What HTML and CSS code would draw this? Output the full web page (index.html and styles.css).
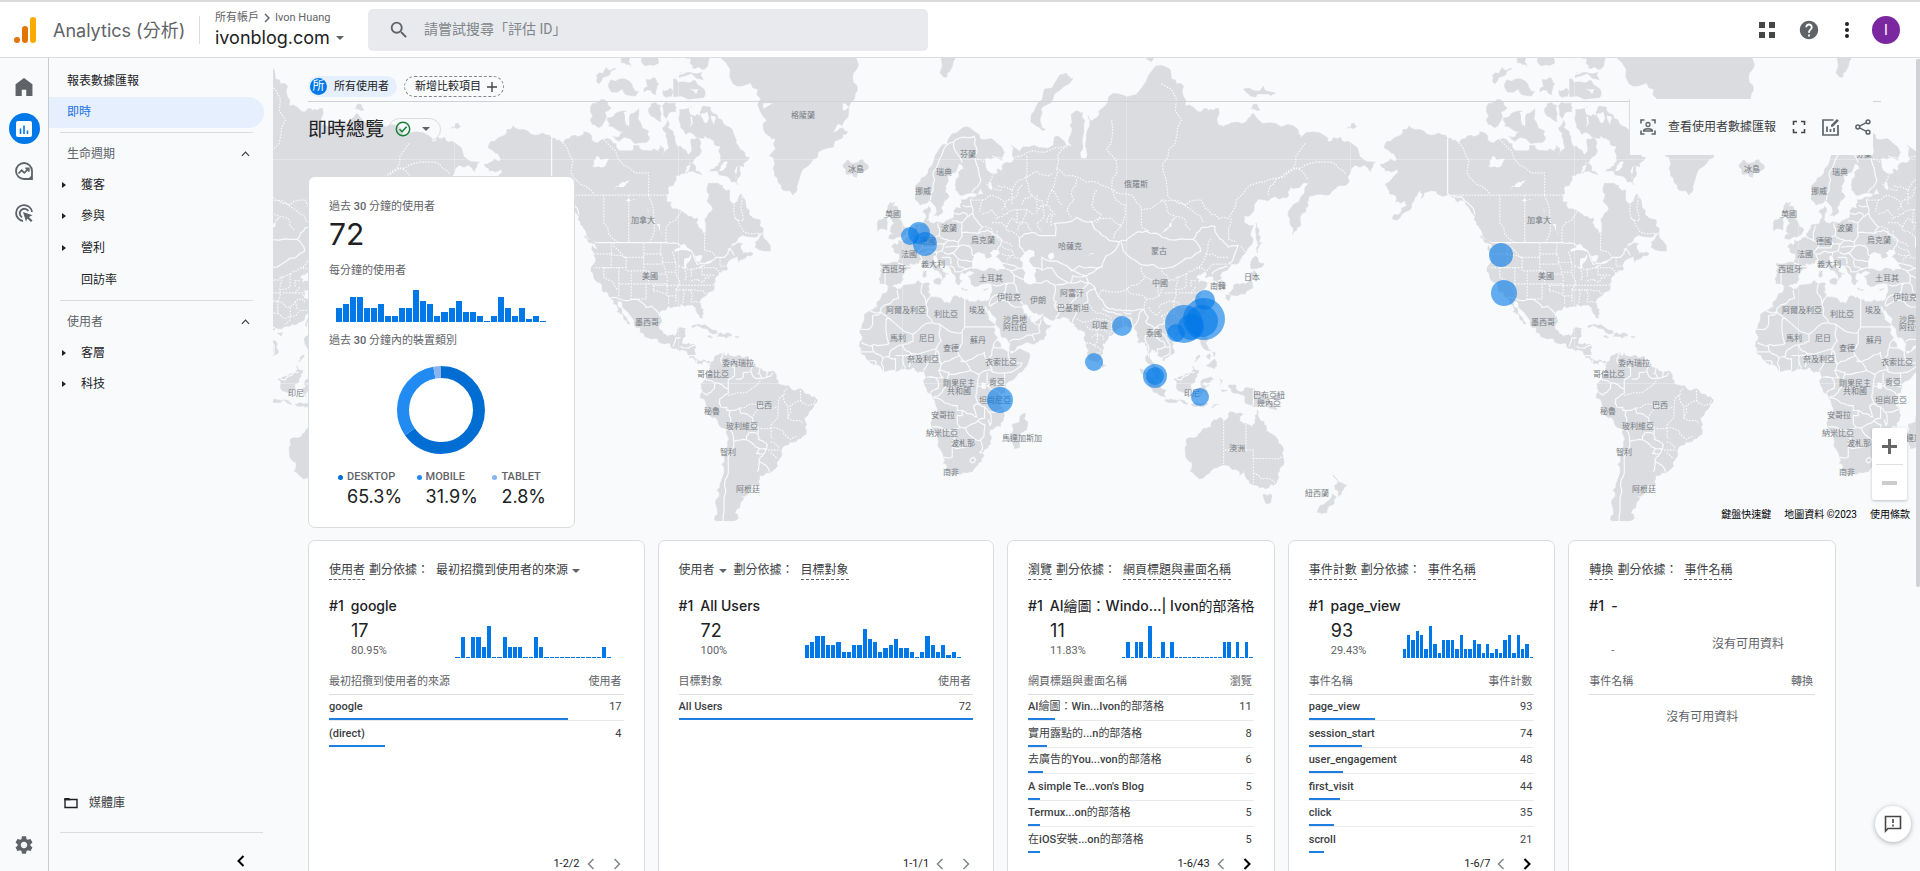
FILE: index.html
```html
<!DOCTYPE html>
<html lang="zh-Hant">
<head>
<meta charset="utf-8">
<title>Analytics (分析) - 即時總覽</title>
<link rel="stylesheet" href="styles.css">
</head>
<body>
<header class="topbar">
  <div class="brand">
    <svg class="logo" viewBox="0 0 22 26" aria-hidden="true"><rect x="16" y="0" width="6" height="26" rx="3" fill="#f9ab00"/><rect x="8" y="9" width="6" height="17" rx="3" fill="#e37400"/><circle cx="3" cy="23" r="3" fill="#e8710a"/></svg>
    <span class="brand-name">Analytics (分析)</span>
  </div>
  <div class="account">
    <div class="crumbs"><span>所有帳戶</span><svg class="crumb-sep" viewBox="0 0 6 10" aria-hidden="true"><path d="M1 1l4 4-4 4" fill="none" stroke="#5f6368" stroke-width="1.5"/></svg><span>Ivon Huang</span></div>
    <button class="property" type="button">ivonblog.com<i class="caret"></i></button>
  </div>
  <label class="search">
    <svg viewBox="0 0 24 24" aria-hidden="true"><path fill="#5f6368" d="M15.5 14h-.79l-.28-.27A6.471 6.471 0 0 0 16 9.5 6.5 6.5 0 1 0 9.5 16c1.61 0 3.09-.59 4.23-1.57l.27.28v.79l5 4.99L20.49 19l-4.99-5zm-6 0C7.01 14 5 11.99 5 9.5S7.01 5 9.5 5 14 7.01 14 9.5 11.99 14 9.5 14z"/></svg>
    <input type="search" placeholder="請嘗試搜尋「評估 ID」" aria-label="搜尋">
  </label>
  <div class="top-actions">
    <button type="button" aria-label="應用程式"><svg viewBox="0 0 22 22"><path fill="#444746" d="M3 3h6v6H3zM13 3h6v6h-6zM3 13h6v6H3zM13 13h6v6h-6z"/></svg></button>
    <button type="button" aria-label="說明"><svg viewBox="0 0 24 24"><path fill="#5f6368" d="M12 2C6.48 2 2 6.48 2 12s4.480 10 10 10 10-4.480 10-10S17.520 2 12 2zm1 17h-2v-2h2v2zm2.070-7.750l-.9.920C13.450 12.900 13 13.500 13 15h-2v-.5c0-1.100.450-2.100 1.170-2.830l1.240-1.260c.370-.360.590-.860.590-1.410 0-1.100-.9-2-2-2s-2 .9-2 2H8c0-2.210 1.790-4 4-4s4 1.790 4 4c0 .880-.360 1.680-.930 2.250z"/></svg></button>
    <button type="button" aria-label="更多"><svg viewBox="0 0 22 22"><g fill="#202124"><circle cx="11" cy="5" r="2"/><circle cx="11" cy="11" r="2"/><circle cx="11" cy="17" r="2"/></g></svg></button>
    <button class="avatar" type="button">I</button>
  </div>
</header>

<div class="shell">
  <nav class="rail" aria-label="主要">
    <a href="#home" aria-label="首頁"><svg viewBox="0 0 16 16"><path fill="#5f6368" d="M8 0l7.500 5.500V16H10v-5.500H6V16H.5V5.500z"/></svg></a>
    <a href="#reports" class="on" aria-label="報表"><svg viewBox="0 0 16 16"><rect width="16" height="16" rx="2" fill="#fff"/><path d="M4.500 7.500V13M8 4.500V13M11.500 9.500V13" stroke="#0078e7" stroke-width="1.600"/></svg></a>
    <a href="#explore" aria-label="探索"><svg viewBox="0 0 18 18"><path fill="none" stroke="#5f6368" stroke-width="1.800" d="M9 1a8 8 0 1 0 0 16h8V9a8 8 0 0 0-8-8z"/><path fill="none" stroke="#5f6368" stroke-width="1.700" d="M3.500 11.500l3.200-3.200 2.600 2.600 4-4M10.300 6.300h3.500v3.500"/><path fill="#5f6368" d="M13 17h4v-4z"/></svg></a>
    <a href="#ads" aria-label="廣告"><svg viewBox="0 0 18 18"><path fill="none" stroke="#5f6368" stroke-width="1.800" d="M8 17A8 8 0 1 1 17 8M7 13.300A4.600 4.600 0 1 1 13.300 7"/><path fill="#5f6368" d="M8 8l9.500 3.200-3.600 1.700 3.600 3.600-1.500 1.500-3.600-3.600L11 17.500z"/></svg></a>
    <a href="#admin" class="admin" aria-label="管理"><svg viewBox="2 2 20 20"><path fill="#5f6368" d="M19.140 12.940c.040-.300.060-.610.060-.940 0-.320-.020-.640-.070-.940l2.030-1.580c.180-.140.230-.410.120-.610l-1.920-3.320c-.120-.220-.370-.290-.590-.220l-2.390.960c-.500-.380-1.030-.700-1.620-.940l-.360-2.540c-.040-.240-.240-.410-.480-.410h-3.840c-.240 0-.430.170-.470.410l-.360 2.540c-.590.240-1.130.570-1.620.940l-2.390-.960c-.220-.080-.470 0-.590.220L2.740 8.870c-.120.210-.080.470.120.610l2.030 1.580c-.050.300-.090.630-.090.940s.020.640.070.940l-2.030 1.580c-.180.140-.230.410-.120.610l1.920 3.320c.120.220.370.290.590.220l2.390-.960c.500.380 1.030.700 1.620.940l.360 2.540c.050.240.240.410.480.410h3.840c.240 0 .440-.170.470-.410l.360-2.540c.590-.240 1.130-.560 1.620-.940l2.390.960c.220.080.470 0 .590-.220l1.920-3.320c.120-.220.070-.470-.120-.610l-2.010-1.580zM12 15.600c-1.980 0-3.600-1.620-3.600-3.600s1.620-3.600 3.600-3.600 3.600 1.620 3.600 3.600-1.620 3.600-3.600 3.600z"/></svg></a>
  </nav>

  <nav class="sidebar" aria-label="報表">
    <a class="side-link" href="#snapshot">報表數據匯報</a>
    <a class="side-link active" href="#realtime">即時</a>
    <section class="group">
      <button class="group-head" type="button">生命週期<svg viewBox="0 0 10 6"><path d="M1 5l4-4 4 4" fill="none" stroke="#3c4043" stroke-width="1.300"/></svg></button>
      <a class="item parent" href="#acq">獲客</a>
      <a class="item parent" href="#eng">參與</a>
      <a class="item parent" href="#mon">營利</a>
      <a class="item" href="#ret">回訪率</a>
    </section>
    <section class="group">
      <button class="group-head" type="button">使用者<svg viewBox="0 0 10 6"><path d="M1 5l4-4 4 4" fill="none" stroke="#3c4043" stroke-width="1.300"/></svg></button>
      <a class="item parent" href="#demo">客層</a>
      <a class="item parent" href="#tech">科技</a>
    </section>
    <a class="library" href="#library"><svg viewBox="0 0 14 12"><path d="M1 2.500v8h12v-8z" fill="none" stroke="#202124" stroke-width="1.400"/><path d="M.3 3.200V1h5l1.500 2.200z" fill="#202124"/></svg>媒體庫</a>
    <div class="side-foot"><button type="button" aria-label="收合"><svg viewBox="0 0 8 12"><path d="M6.500 1l-5 5 5 5" fill="none" stroke="#000" stroke-width="2"/></svg></button></div>
  </nav>

  <main class="main">
    <svg class="map" id="map" viewBox="273 58 1643 463" preserveAspectRatio="xMinYMin slice" role="img" aria-label="使用者世界地圖"></svg>
    <div class="map-zoom"><button type="button" aria-label="放大"><i class="plus"></i></button><button type="button" aria-label="縮小" disabled><i class="minus"></i></button></div>
    <div class="map-legal"><button type="button">鍵盤快速鍵</button><span>地圖資料 ©2023</span><a href="#terms">使用條款</a></div>

    <div class="content">
      <div class="compare">
        <button class="chip" type="button"><span class="chip-dot">所</span>所有使用者</button>
        <button class="chip-add" type="button">新增比較項目<svg viewBox="0 0 10 10"><path d="M5 0v10M0 5h10" stroke="#444746" stroke-width="1.400"/></svg></button>
      </div>
      <div class="title-row">
        <h1>即時總覽</h1>
        <button class="status" type="button" aria-label="資料品質"><svg viewBox="0 0 16 16"><circle cx="8" cy="8" r="6.700" fill="none" stroke="#188038" stroke-width="1.500"/><path d="M4.500 8.200l2.500 2.500 4.600-5" fill="none" stroke="#188038" stroke-width="1.600"/></svg><i class="caret"></i></button>
        <div class="toolbar">
          <button type="button"><svg viewBox="0 0 16 16"><g fill="none" stroke="#5f6368" stroke-width="1.600"><path d="M1 4.500V1h3.500M11.500 1H15v3.500M15 11.500V15h-3.500M4.500 15H1v-3.500"/><circle cx="8" cy="5.500" r="2" stroke-width="1.300"/><path d="M3.500 12c0-3 9-3 9 0z" stroke-width="1.300"/></g></svg>查看使用者數據匯報</button>
          <button type="button" aria-label="全螢幕"><svg viewBox="0 0 16 16"><path d="M2.500 6V2.500H6M10 2.500h3.500V6M13.500 10v3.500H10M6 13.500H2.500V10" fill="none" stroke="#444746" stroke-width="1.600"/></svg></button>
          <button type="button" aria-label="自訂報表"><svg class="wide" viewBox="0 0 18 18"><path d="M11.500 2H1v15h15V7" fill="none" stroke="#5f6368" stroke-width="1.700"/><path d="M5 8.500V14M8.500 11v3M12 10v4" stroke="#5f6368" stroke-width="1.700"/><path d="M9 8.800V7l6-6 1.800 1.800-6 6z" fill="#5f6368"/></svg></button>
          <button type="button" aria-label="分享"><svg viewBox="0 0 16 16"><g fill="none" stroke="#5f6368" stroke-width="1.500"><circle cx="13" cy="2.800" r="1.900"/><circle cx="2.800" cy="8" r="1.900"/><circle cx="13" cy="13.200" r="1.900"/><path d="M4.500 7.100l6.800-3.400M4.500 8.900l6.800 3.400"/></g></svg></button>
        </div>
      </div>

      <section class="card overview">
        <h2>過去 <b>30</b> 分鐘的使用者</h2>
        <p class="total">72</p>
        <h2>每分鐘的使用者</h2>
        <div class="bars" data-values="14,18,25,25,14,14,18,6,6,14,14,32,21,18,6,10,14,21,10,10,6,1,6,25,14,6,14,3,6,1"></div>
        <h2>過去 <b>30</b> 分鐘內的裝置類別</h2>
        <svg class="donut" viewBox="0 0 88 88" role="img" aria-label="裝置類別"><g fill="none" stroke-width="12" transform="rotate(-90 44 44)"><circle cx="44" cy="44" r="38" pathLength="1000" stroke="#006dd3" stroke-dasharray="653 1000"/><circle cx="44" cy="44" r="38" pathLength="1000" stroke="#228bf2" stroke-dasharray="319 1000" stroke-dashoffset="-653"/><circle cx="44" cy="44" r="38" pathLength="1000" stroke="#8ab4f0" stroke-dasharray="28 1000" stroke-dashoffset="-972"/></g></svg>
        <dl class="legend">
          <div class="desktop"><dt>DESKTOP</dt><dd>65.3%</dd></div>
          <div class="mobile"><dt>MOBILE</dt><dd>31.9%</dd></div>
          <div class="tablet"><dt>TABLET</dt><dd>2.8%</dd></div>
        </dl>
      </section>

      <div class="cards">
        <section class="card report roomy">
          <h3><button type="button" class="dash">使用者</button><span>劃分依據：</span><button type="button">最初招攬到使用者的來源<i class="caret"></i></button></h3>
          <p class="lead"><span>#1</span><span>google</span></p>
          <div class="summary"><div class="figures"><p class="num">17</p><p class="pct">80.95%</p></div><div class="bars" data-values="1,21,1,21,21,11,32,1,1,21,11,11,11,1,1,21,11,1,1,1,1,1,1,1,1,1,1,1,11,1"></div></div>
          <div class="table-box"><table>
            <thead><tr><th>最初招攬到使用者的來源</th><th>使用者</th></tr></thead>
            <tbody>
              <tr><td>google<span class="bar" style="width:81%"></span></td><td>17</td></tr>
              <tr><td>(direct)<span class="bar" style="width:19%"></span></td><td>4</td></tr>
            </tbody>
          </table></div>
          <div class="pager"><span>1-2/2</span><button type="button" disabled aria-label="上一頁"><svg viewBox="0 0 8 12"><path d="M6.500 1l-5 5 5 5"/></svg></button><button type="button" disabled aria-label="下一頁"><svg viewBox="0 0 8 12"><path d="M1.500 1l5 5-5 5"/></svg></button></div>
        </section>

        <section class="card report roomy">
          <h3><button type="button">使用者<i class="caret"></i></button><span>劃分依據：</span><button type="button" class="dash">目標對象</button></h3>
          <p class="lead"><span>#1</span><span>All Users</span></p>
          <div class="summary"><div class="figures"><p class="num">72</p><p class="pct">100%</p></div><div class="bars" data-values="13,16,22,22,13,13,16,6,6,13,13,29,19,16,6,10,13,19,10,10,6,1,6,22,13,6,13,3,6,1"></div></div>
          <div class="table-box"><table>
            <thead><tr><th>目標對象</th><th>使用者</th></tr></thead>
            <tbody><tr><td>All Users<span class="bar" style="width:100%"></span></td><td>72</td></tr></tbody>
          </table></div>
          <div class="pager"><span>1-1/1</span><button type="button" disabled aria-label="上一頁"><svg viewBox="0 0 8 12"><path d="M6.500 1l-5 5 5 5"/></svg></button><button type="button" disabled aria-label="下一頁"><svg viewBox="0 0 8 12"><path d="M1.500 1l5 5-5 5"/></svg></button></div>
        </section>

        <section class="card report">
          <h3><button type="button" class="dash">瀏覽</button><span>劃分依據：</span><button type="button" class="dash">網頁標題與畫面名稱</button></h3>
          <p class="lead"><span>#1</span><span>AI<em>繪圖：</em>Windo...| Ivon<em>的部落格</em></span></p>
          <div class="summary"><div class="figures"><p class="num">11</p><p class="pct">11.83%</p></div><div class="bars" data-values="1,16,1,16,16,1,32,1,1,16,1,16,1,1,1,1,1,1,1,1,1,1,1,16,16,1,16,1,16,1"></div></div>
          <div class="table-box"><table>
            <thead><tr><th>網頁標題與畫面名稱</th><th>瀏覽</th></tr></thead>
            <tbody>
              <tr><td>AI<em>繪圖：</em>Win...Ivon<em>的部落格</em><span class="bar" style="width:12%"></span></td><td>11</td></tr>
              <tr><td><em>實用露點的</em>...n<em>的部落格</em><span class="bar" style="width:8.500%"></span></td><td>8</td></tr>
              <tr><td><em>去廣告的</em>You...von<em>的部落格</em><span class="bar" style="width:6.400%"></span></td><td>6</td></tr>
              <tr><td>A simple Te...von's Blog<span class="bar" style="width:5.400%"></span></td><td>5</td></tr>
              <tr><td>Termux...on<em>的部落格</em><span class="bar" style="width:5.400%"></span></td><td>5</td></tr>
              <tr><td><em>在</em>iOS<em>安裝</em>...on<em>的部落格</em><span class="bar" style="width:5.400%"></span></td><td>5</td></tr>
            </tbody>
          </table></div>
          <div class="pager"><span>1-6/43</span><button type="button" disabled aria-label="上一頁"><svg viewBox="0 0 8 12"><path d="M6.500 1l-5 5 5 5"/></svg></button><button type="button" aria-label="下一頁"><svg viewBox="0 0 8 12"><path d="M1.500 1l5 5-5 5"/></svg></button></div>
        </section>

        <section class="card report">
          <h3><button type="button" class="dash">事件計數</button><span>劃分依據：</span><button type="button" class="dash">事件名稱</button></h3>
          <p class="lead"><span>#1</span><span>page_view</span></p>
          <div class="summary"><div class="figures"><p class="num">93</p><p class="pct">29.43%</p></div><div class="bars" data-values="9,23,18,27,23,9,32,14,5,18,18,18,9,23,9,9,18,14,5,14,5,9,5,18,23,5,23,9,14,1"></div></div>
          <div class="table-box"><table>
            <thead><tr><th>事件名稱</th><th>事件計數</th></tr></thead>
            <tbody>
              <tr><td>page_view<span class="bar" style="width:29.400%"></span></td><td>93</td></tr>
              <tr><td>session_start<span class="bar" style="width:23.400%"></span></td><td>74</td></tr>
              <tr><td>user_engagement<span class="bar" style="width:15.200%"></span></td><td>48</td></tr>
              <tr><td>first_visit<span class="bar" style="width:13.900%"></span></td><td>44</td></tr>
              <tr><td>click<span class="bar" style="width:11.100%"></span></td><td>35</td></tr>
              <tr><td>scroll<span class="bar" style="width:6.600%"></span></td><td>21</td></tr>
            </tbody>
          </table></div>
          <div class="pager"><span>1-6/7</span><button type="button" disabled aria-label="上一頁"><svg viewBox="0 0 8 12"><path d="M6.500 1l-5 5 5 5"/></svg></button><button type="button" aria-label="下一頁"><svg viewBox="0 0 8 12"><path d="M1.500 1l5 5-5 5"/></svg></button></div>
        </section>

        <section class="card report">
          <h3><button type="button" class="dash">轉換</button><span>劃分依據：</span><button type="button" class="dash">事件名稱</button></h3>
          <p class="lead"><span>#1</span><span>-</span></p>
          <div class="summary"><div class="figures"><p class="num"></p><p class="pct">-</p></div><p class="no-chart">沒有可用資料</p></div>
          <div class="table-box"><table>
            <thead><tr><th>事件名稱</th><th>轉換</th></tr></thead>
          </table><p class="no-rows">沒有可用資料</p></div>
        </section>
      </div>
    </div>
    <button class="feedback" type="button" aria-label="意見回饋"><svg viewBox="0 0 18 18"><path d="M1.500 16V1.500h15v12H4z" fill="none" stroke="#444746" stroke-width="1.600"/><path d="M9 4v4M9 9.500v2" stroke="#444746" stroke-width="1.600"/></svg></button>
    <div class="scroll-thumb"></div>
  </main>
</div>
<script src="script.js"></script>
</body>
</html>
```
FILE: styles.css
```css
* { box-sizing: border-box; }
body {
  margin: 0; height: 100vh; overflow: hidden; display: flex; flex-direction: column;
  background: #f8fafc; color: #202124;
  font-family: Roboto, "Noto Sans CJK TC", sans-serif; font-size: 12px; line-height: 16px;
}
h1, h2, h3, p, dl, dd { margin: 0; font-weight: 400; }
em { font-style: normal; font-weight: 400; }
button { border: 0; padding: 0; margin: 0; background: none; font: inherit; color: inherit; }
a { color: inherit; text-decoration: none; }
svg { display: block; flex: none; }
.caret { display: inline-block; border: 4px solid transparent; border-top-color: #5f6368; border-bottom: 0; }

/* top bar */
.topbar { flex: none; height: 58px; display: flex; align-items: center; background: #fff; border-top: 2px solid #dadada; border-bottom: 1px solid #dadce0; padding: 0 20px 0 14px; }
.brand { display: flex; align-items: center; gap: 17px; width: 186px; height: 28px; border-right: 1px solid #dadce0; }
.logo { width: 22px; height: 26px; }
.brand-name { font: 18px/28px Inter, "Noto Sans CJK TC", sans-serif; color: #5f6368; white-space: nowrap; padding-top: 3px; }
.account { width: 168px; padding-left: 15px; }
.crumbs { display: flex; align-items: center; gap: 5px; font-size: 11px; line-height: 16px; color: #5f6368; }
.crumb-sep { width: 6px; height: 10px; }
.property { display: flex; align-items: center; gap: 6px; font: 18px/24px Inter, sans-serif; color: #202124; }
.search { flex: 0 1 560px; height: 42px; display: flex; align-items: center; background: #e8eaed; border-radius: 5px; padding-left: 20px; }
.search svg { width: 22px; height: 22px; }
.search input { flex: 1; min-width: 0; border: 0; background: none; padding: 0 14px 2px; font: inherit; font-size: 14px; outline: 0; }
.search input::placeholder { color: #80868b; opacity: 1; }
.top-actions { margin-left: auto; display: flex; align-items: center; gap: 20px; }
.top-actions svg { width: 22px; height: 22px; }
.top-actions .avatar { width: 28px; height: 28px; border-radius: 50%; background: #7b28a0; color: #fff; font-size: 14px; margin-left: -6px; }
.top-actions button:nth-child(3) { margin-left: -4px; }

.shell { flex: 1; min-height: 0; display: flex; }
.rail { flex: none; width: 49px; border-right: 1px solid #c9cccf; display: flex; flex-direction: column; align-items: center; gap: 11px; padding: 13px 0 11px; }
.rail a { width: 31px; height: 31px; display: grid; place-items: center; border-radius: 50%; }
.rail a.on { background: #0078e7; }
.rail svg { width: 18px; height: 18px; }
.rail .on svg { width: 16px; height: 16px; }
.rail .admin { margin-top: auto; }

.sidebar { flex: none; width: 224px; display: flex; flex-direction: column; padding-top: 8px; }
.side-link { display: block; height: 31px; line-height: 30px; padding-left: 18px; margin-right: 9px; }
.side-link.active { background: #e5effd; color: #1a73e8; border-radius: 0 16px 16px 0; margin-bottom: 4px; }
.group { margin: 0 20px 4px 11px; border-top: 1px solid #dadce0; padding: 5px 0 0; }
.group-head { display: flex; align-items: center; justify-content: space-between; width: 100%; height: 31px; padding: 0 3px 0 7px; color: #5f6368; }
.group-head svg { width: 9px; height: 6px; }
.item { display: flex; align-items: center; height: 32px; padding-left: 21px; }
.group .item:nth-of-type(1) { height: 31px; }
.item.parent { padding-left: 2px; gap: 15px; }
.item.parent::before { content: ""; border: 3px solid transparent; border-left: 4px solid #202124; border-right: 0; }
.library { margin-top: auto; display: flex; align-items: center; gap: 11px; height: 32px; padding-left: 15px; color: #3c4043; }
.library svg { width: 14px; height: 12px; }
.side-foot { margin: 13px 10px 0 11px; border-top: 1px solid #dadce0; height: 39px; display: flex; justify-content: flex-end; padding: 17px 18px 0 0; }
.side-foot svg { width: 8px; height: 12px; }

/* map */
.main { flex: 1; min-width: 0; position: relative; overflow: hidden; padding-right: 4px; }
.map { position: absolute; left: 0; top: 0; width: calc(100% - 4px); height: 463px; }
.land { fill: #dadce0; stroke: #dadce0; stroke-width: .5; stroke-linejoin: round; }
.water { fill: #f8fafc; }
.border { fill: none; stroke: #f8fafc; stroke-width: 1.200; }
.region { fill: none; stroke: #f8fafc; stroke-width: 1.200; stroke-dasharray: 1.600 1.400; }
.seam { stroke: #fff; stroke-opacity: .3; }
.place { font-size: 8px; fill: #757a80; text-anchor: middle; dominant-baseline: central; }
.pin { fill: #0078e7; fill-opacity: .6; }
.map-zoom { position: absolute; right: 13px; top: 370px; width: 35px; background: #fff; box-shadow: 0 1px 3px rgba(60, 64, 67, .3); border-radius: 2px; }
.map-zoom button { display: grid; place-items: center; width: 27px; height: 36px; margin: 0 4px; }
.map-zoom button + button { border-top: 1px solid #e0e0e0; }
.minus { width: 15px; height: 4px; background: #ccc; }
.plus { width: 15px; height: 15px; background: linear-gradient(#666, #666) center / 15px 3px no-repeat, linear-gradient(#666, #666) center / 3px 15px no-repeat; }
.map-legal { position: absolute; right: 4px; top: 449px; display: flex; gap: 13px; padding: 0 6px; font-size: 10px; line-height: 15px; color: #000; background: rgba(248, 250, 252, .8); }

/* content */
.content { position: relative; padding: 18px 35px 0; pointer-events: none; }
.content button, .card { pointer-events: auto; }
.compare { display: flex; gap: 7px; padding-bottom: 4px; border-bottom: 1px solid #d0d2d6; }
.chip { display: flex; align-items: center; gap: 7px; height: 21px; padding: 0 8px 0 2px; border-radius: 11px; background: #e5effd; font-size: 11px; }
.chip-dot { width: 17px; height: 17px; border-radius: 50%; background: #0078e7; color: #fff; font-size: 12px; line-height: 16px; }
.chip-add { display: flex; align-items: center; gap: 6px; height: 21px; padding: 0 6px 0 10px; border: 1px dashed #80868b; border-radius: 11px; font-size: 11px; }
.chip-add svg { width: 10px; height: 10px; }
.title-row { display: flex; align-items: center; height: 54px; }
h1 { font-size: 19px; line-height: 26px; padding-top: 1px; }
.status { display: flex; align-items: center; gap: 11px; height: 23px; margin-left: 4px; padding: 0 10px 0 6px; border: 1px solid #dadce0; border-radius: 12px; }
.status svg { width: 16px; height: 16px; }
.toolbar { margin: -4px 8px 0 auto; height: 56px; display: flex; align-items: center; gap: 15px; padding: 0 2px 0 10px; background: #f8fafc; border-left: 1px solid #dadce0; }
.toolbar button { display: flex; align-items: center; gap: 12px; color: #3c4043; }
.toolbar svg { width: 16px; height: 16px; }
.toolbar .wide { width: 18px; height: 18px; }
.card { background: #fff; border: 1px solid #dadce0; border-radius: 7px; }
.bars { display: flex; align-items: flex-end; gap: 1px; height: 32px; }
.bars i { flex: 1; background: #0078e7; }

.overview { width: 267px; margin-top: 20px; padding: 22px 20px 18px; }
h2 { font-size: 11px; line-height: 16px; color: #5f6368; }
h2 b { font-weight: 500; }
.total { font: 30px/36px Inter, sans-serif; margin: 1px 0 11px; }
.overview .bars { margin: 11px 8px 11px 7px; }
.donut { width: 88px; height: 88px; margin: 17px auto 15px 68px; }
.legend { display: flex; justify-content: space-between; padding: 0 8px 0 9px; }
.legend > div { position: relative; padding-left: 9px; }
.legend > div::before { content: ""; position: absolute; left: 0; top: 6px; width: 5px; height: 5px; border-radius: 50%; background: #006dd3; }
.legend .mobile::before { background: #228bf2; }
.legend .tablet::before { background: #8ab4f0; }
dt { font-size: 11px; font-weight: 500; color: #5f6368; }
dd { font: 18px/24px Inter, sans-serif; }

.cards { display: grid; grid-template-columns: 337fr 337fr 268fr 268fr 268fr; gap: 13px; margin: 12px 45px 0 0; }
.report { min-width: 0; padding: 19px 20px 20px; color: #3c4043; }
h3 { display: flex; gap: 4px; font-size: 12px; line-height: 20px; white-space: nowrap; }
h3 span + button { margin-left: 3px; }
.dash { border-bottom: 1px dashed #5f6368; line-height: 18px; }
h3 .caret { margin: 0 3px 0 4px; vertical-align: middle; }
.lead { display: flex; gap: 7px; margin-top: 16px; font: 500 14px/20px Inter, "Noto Sans CJK TC", sans-serif; color: #202124; white-space: nowrap; }
.summary { display: flex; align-items: flex-end; height: 42px; }
.figures { padding-left: 22px; margin-bottom: -1px; }
.num { font: 18px/24px Inter, sans-serif; color: #202124; }
.pct { font-size: 11px; line-height: 16px; color: #5f6368; }
.report .bars { width: 58%; margin-left: auto; margin-right: 1px; }
.roomy .bars { width: 53%; margin-right: 12px; }
.no-chart { margin: 0 31px 6px auto; color: #5f6368; }
.table-box { min-height: 184px; margin-top: 12px; }
table { width: 100%; border-collapse: collapse; font-size: 11px; }
th { height: 24px; padding: 0; text-align: left; font-weight: 400; color: #5f6368; border-bottom: 1px solid #dadce0; }
th:last-child, td:last-child { text-align: right; padding-right: 2px; }
tbody tr { position: relative; height: 26px; }
tbody tr:nth-child(even) { height: 27px; }
td { padding: 0; border-bottom: 1px solid #e8eaed; font-weight: 500; white-space: nowrap; }
td:last-child { font-weight: 400; }
tr:last-child td { border-bottom-color: transparent; }
.bar { position: absolute; left: 0; bottom: 0; height: 2px; background: #1e7fe0; }
.no-rows { text-align: center; margin-top: 14px; color: #5f6368; }
.pager { display: flex; align-items: center; justify-content: flex-end; height: 20px; padding-right: 3px; font-size: 11px; color: #202124; }
.pager button { margin-left: 18px; }
.pager span + button { margin-left: 7px; }
.pager svg { width: 8px; height: 12px; fill: none; stroke: #000; stroke-width: 2; }
.pager button:disabled svg { stroke: #80868b; stroke-width: 1.500; }

.feedback { position: absolute; right: 9px; bottom: 29px; width: 36px; height: 36px; border-radius: 50%; background: #fff; box-shadow: 0 1px 5px rgba(60, 64, 67, .4); display: grid; place-items: center; }
.feedback svg { width: 18px; height: 18px; }
.scroll-thumb { position: absolute; right: 0; top: 1px; width: 4px; height: 528px; background: #d0d2d5; border-radius: 3px 0 3px 3px; }
```
FILE: script.js
```javascript
// Mercator world map, 896 units wide, repeated sideways.
const WORLD = 896;
const X0 = 902.5;
const Y0 = 383;

const project = ([lon, lat]) => [
  X0 + (lon * WORLD) / 360,
  Y0 - (WORLD / (2 * Math.PI)) * Math.log(Math.tan(Math.PI / 4 + (lat * Math.PI) / 360)),
];

// Repeatable noise for coast detail.
const noise = (x, y) => {
  const s = Math.sin(x * 12.9898 + y * 78.233) * 43758.5453;
  return (s - Math.floor(s)) * 2 - 1;
};

function roughen(points, closed, amount, depth) {
  let list = points;
  for (let d = 0; d < depth; d++) {
    const out = [];
    list.forEach((p, i) => {
      out.push(p);
      if (i === list.length - 1 && !closed) return;
      const q = list[(i + 1) % list.length];
      const dx = q[0] - p[0];
      const dy = q[1] - p[1];
      const len = Math.hypot(dx, dy);
      if (len < 2.5 || Math.abs(dy) < 0.01 || Math.abs(dx) < 0.01) return;
      const k = noise(p[0] + q[0], p[1] + q[1]) * amount;
      out.push([(p[0] + q[0]) / 2 - dy * k, (p[1] + q[1]) / 2 + dx * k]);
    });
    list = out;
  }
  return list;
}

function pathFrom(lines, closed, amount, depth) {
  return lines.trim().split("\n").map((line) => {
    const pts = line.trim().split(/\s+/).map((s) => project(s.split(",").map(Number)));
    return "M" + roughen(pts, closed, amount, depth).map((p) => p.map((n) => n.toFixed(1)).join(" ")).join("L") + (closed ? "Z" : "");
  }).join("");
}

const land = `
-168,65.6 -164,66.6 -161.8,66.2 -163.8,67.5 -166.5,68.3 -163,69.5 -159,70.8 -156.5,71.3 -152,70.8 -146,70.1 -141,69.6 -137,69 -134,69.6 -129,70 -128,70.5 -125,69.4 -120,69.5 -115,68.8 -114,67.8 -109,67.8 -108,68.6 -106,68.6 -102,67.8 -98,67.7 -97.5,68.6 -96,68.2 -96,67 -94.5,69.5 -96.5,71 -94.5,72 -92,70.5 -91.5,69.5 -88,68 -86,67.2 -85,69.5 -82,69.6 -81.5,68.5 -82,67 -84,66.2 -87,65.3 -88,64 -91,63.8 -91,62.8 -93.5,61.8 -94.7,60 -94.7,58.7 -92.8,58.6 -92.4,57.1 -90,57 -87,56 -82.3,55.1 -82,53 -80.5,51.3 -79,51.5 -79,53.5 -79.5,54.8 -76.7,56.5 -77,58 -78.5,58.8 -77.5,60 -78,62.3 -74,62.3 -71.5,61.2 -69.5,61 -69.5,59 -67.5,58.2 -66,58.8 -64.8,60.3 -63,58.2 -61.5,56.5 -60,55 -57.3,54.6 -56,52.8 -56,51.8 -59,50.4 -66,50.2 -68.5,48.8 -70.5,47.2 -66,49 -64.3,48.8 -65,47.3 -64,46 -61,46.5 -60,46 -64,44.5 -65.8,43.6 -66,45.2 -67.5,44.8 -70,43.8 -70.8,42.5 -70,41.8 -74,40.7 -74.2,39.5 -75.3,38.2 -76,37 -75.7,35.3 -77.5,34.3 -79.2,33 -81.3,31.5 -81,29 -80,26.8 -80.4,25.3 -81.2,25.3 -82.7,27.6 -82.8,29.1 -84.2,30 -85.5,29.8 -89,30.3 -89.3,29.2 -91,29.3 -94,29.6 -97.2,27.8 -97.4,25.8 -97.8,22.5 -96.2,19.3 -94.5,18.2 -91.5,18.5 -90.5,20.8 -87,21.5 -87.5,19.5 -88.3,17.5 -88.7,15.8 -86,15.9 -83.3,15 -83.5,12.5 -83.7,11 -82,9 -80,9.3 -77.3,8.6 -77.5,7.4 -78.5,8.3 -79.7,8.8 -80.5,7.4 -83,8.3 -85.6,10 -85.9,11.2 -87.6,13 -91,13.9 -94,16.1 -96.5,15.7 -101,17.4 -105.5,20 -105.4,21.8 -108.5,25.3 -110.5,27.5 -112.5,29.8 -113.2,31.2 -114.8,31.7 -114.6,30.2 -112.8,28 -111,25.5 -109.5,23.2 -110.2,23 -112.1,25 -112.2,26.2 -114.8,27.5 -114.1,28.3 -116,30.3 -117.2,32.6 -118.5,34 -120.6,34.6 -122.5,37.5 -124.3,40.4 -124.1,43 -124,46.3 -124.7,48.3 -122.6,47.2 -122.9,49 -127,50.8 -128,52.5 -130.3,54.7 -132,57 -135,59 -137,58.6 -140,59.8 -144,60 -148,60.9 -151.5,59.3 -152,61 -154.5,58.8 -158,56.5 -163,54.8 -160,56.2 -157.5,57.8 -157.6,58.8 -162,58.7 -162.2,60 -165,61.2 -166,62.2 -161,64.2 -161.2,64.8 -166,64.5
-80,73.7 -76,72.8 -72,71.6 -68,70.3 -67,69 -64,67.8 -61.5,66.8 -63.8,65.2 -66.5,66 -65,64 -66,62 -68.7,62.5 -72,63.7 -77.5,64.5 -74,65.4 -73,67 -73.2,68.5 -77,69.5 -79,70 -84,70.2 -89,71 -89.5,73.3 -85,73.7 -84,72.5 -81,72.6
-105,69 -114,69.2 -116.5,69.9 -112,70.5 -118,71.3 -118.5,72.3 -114,73 -109,72.8 -106,73.4 -104.5,71 -101.5,69.7
-125.5,72 -123,71.2 -119.5,72 -117,73.5 -121,74.4 -124.5,74
-102,73 -97,71.8 -97.2,73.8 -101,73.9
-95,72.2 -91,73 -91.2,74 -95.3,74.1
-117,75.2 -109,74.8 -106,75.2 -110,76.3 -117.2,76.4
-104,75.2 -99,74.9 -98,76 -100,76.6 -103,76.4
-96,74.8 -93,74.7 -93.4,75.6 -96.4,75.4
-122,76 -117.5,76.9 -115,77.4 -119,77.5 -123,76.8
-92,74.7 -80,74.6 -80.3,75.6 -88,76.2 -92,76.5
-90,76.6 -80,76.4 -78,78 -72,79.5 -62,82.3 -90,81.5 -86,80 -88,78.5 -84,77.6
-95,78.5 -90,78.3 -89.6,80 -91,81 -96,80.6 -93,79.5
-105,78 -98,77.9 -100,79 -105.4,79.1
-113,77.9 -109,77.6 -110,78.5 -113,78.4
-87,64 -83,64.2 -80.5,63.8 -84,65.8 -86,66
-59.2,47.8 -55.6,46.8 -53,46.8 -53.2,48.5 -55.5,50 -56,51.5 -57.5,50.3
-128,50.7 -125,50 -123.5,48.5 -125.5,48.9
-73,78.3 -68,76 -61,76.1 -57,74.5 -54.5,72 -54,70 -51,69.5 -53.5,67 -52,65 -50,62.5 -48,61 -44,60 -42.5,61.5 -40.5,64.5 -37,65.8 -32,68 -25,69.5 -22,70.5 -24,71.6 -21.6,73 -19,75 -20,76.6 -18,78 -15,81 -30,83 -60,82
-84.8,21.9 -82,23.1 -79,22.6 -75,20.7 -74.3,20.1 -77.5,19.9 -78.5,21.3 -82,22.4
-74.3,18.4 -73,19.9 -70,19.7 -68.5,18.6 -71,17.8
-67.2,18.4 -65.7,18.4 -65.8,18 -67,18
-78.3,18.4 -76.3,18.1 -77.2,17.8
-77.7,7.7 -76.8,8.4 -75.7,9.5 -75,11 -72,12.1 -71.5,10.8 -70,12 -68,10.5 -64.5,10.2 -62,10.6 -60,8.4 -57,5.9 -52,4.8 -50.8,2 -50,0 -48,-.8 -44.5,-2.7 -40,-2.9 -37,-4.8 -35.2,-5.5 -34.8,-8 -37,-11 -39,-13.5 -39.2,-17.5 -40.9,-21.8 -43.5,-23 -46.5,-24.2 -48.6,-26 -48.7,-28.4 -50.5,-30.5 -53.5,-33.9 -56,-34.8 -58.3,-34 -57.3,-35.9 -57.7,-38 -62,-39 -62.5,-41 -65,-41.2 -64,-42.5 -65.3,-44.5 -67.3,-46 -65.8,-47.5 -68,-50 -69,-52 -74,-52 -75.5,-48 -74.5,-45 -73.7,-41.5 -73.3,-37.5 -71.6,-33 -71.5,-29 -70.3,-23 -70.4,-18.3 -74,-16 -76.3,-13.8 -79,-8.5 -81.2,-6 -80.3,-3.3 -80.9,-2 -80,.5 -78.7,1.5 -77.3,4 -77.5,7
-9,37 -9.4,38.8 -8.8,41 -9,43.2 -4,43.5 -1.7,43.4 -1.2,46 -4.5,48 -1.5,48.7 -1.6,49.7 1.5,50.2 4,51.7 5,53.3 8.5,53.8 8.2,56.5 10.5,57.7 10.4,55.5 9.8,54.6 11,54 14,54.2 18.5,54.7 20,54.9 21,56 21.5,57.5 24,57.2 23.5,59.1 28,59.6 30,60 28,60.5 23,60 21.3,61 21.5,63 25.3,65 22.5,65.8 21,64.2 17.5,62 17.3,60.6 18.8,59.8 16.5,58.5 16.3,56.5 14.3,55.5 12.8,55.6 11.3,58.8 10.5,59.3 7,58 5,59.5 5.1,61.8 9,63.5 12.5,66 15,68.2 19,69.8 24,71 30,70.3 33,69.4 41,67.5 40,66.3 34,66.7 33,66.5 35,64.3 37.5,64 38,64.8 40,64.6 40.1,65.5 44,66 44.2,67.5 43.5,68.6 46,68 46.2,66.8 53,68.6 60,68.5 61,69.8 65,69.2 68,68.3 67,69.7 67.2,71.3 69,73 72.5,72.9 72.8,71 72.2,69 71.5,67 73,66.5 74,68 73.8,70 74.5,72.6 75.3,72 78,72.3 81,73.6 87,75 98,76.3 104,77.7 108,76.5 113,75.8 113.5,73.7 119,73 123,73.2 127,73.4 129,71.2 133,71.7 139,72.3 141,72.8 150,71.6 159,70.8 160,69.7 170,69.9 171,69.1 176,69.8 180,69 190,66 188,64.4 182,65.5 179.5,62.6 175,61.8 170,60 163.5,59.8 163,58 162,56.5 160,53.2 156.7,51 155.6,54 156,57.3 161.5,60.4 163.5,62.4 160,61.7 156,61.6 154.5,59.5 148,59.4 143,59.2 136.5,55.5 137.5,54 141,53.3 140.3,48.5 135.5,44 132,43.2 129.7,41 127.5,39.6 129.4,37 129.2,35.3 126.5,34.5 126.7,37.5 125,38 124.8,39.6 121.5,39 121.8,40.8 118,39.1 119,37.3 122.5,37.2 119.3,35 121.8,31.5 121.9,29.3 119.8,25.7 116.5,23 113.5,22.2 110.4,21.2 108,21.6 105.8,19 108.8,15.5 109.2,12 106.8,10.4 104.8,8.7 105,10.2 102.6,12 100.9,13.3 100,13.4 99.3,10 100.3,8.3 102,6.3 103.3,4.2 104,1.5 101.3,2.8 100.3,5.8 98.3,8.2 98.7,12 97.6,16.4 95.3,15.8 94.3,16.2 94.2,19 92,21.8 90.5,22.5 87,21.4 85,19.6 82,16.6 80.2,15.5 80.3,12.5 79.8,10.3 78,8.3 76.5,8.8 74.8,13 73,17 72.8,20.5 70.8,20.8 69,22.3 70,22.8 67,24.8 61.6,25.2 57.3,25.7 56.5,27 54.5,26.6 51.5,27.9 50,30.1 48,30 48.5,28.3 50.2,26.2 51.2,24.6 51.3,26 51.8,24.2 54,24.1 56.3,26.2 56.5,24.5 59.8,22.5 57.8,18.9 55,17 52,15.6 45,12.8 43.4,12.7 42.7,16.3 39.2,21.3 35,28 34.9,29.4 34.3,27.8 32.6,29.9 32.3,31.2 34.3,31.3 36,35.8 36.1,36.8 31,36.7 30.5,36.3 27.5,36.9 26.3,39.3 29,40.6 27.5,41 26,40.7 23.5,40.4 23,39.5 24,37.8 22.8,36.6 21.6,37.2 21.5,38.3 19.4,41.5 19,42.2 15.5,43.9 13.7,45.5 12.4,45.2 12.5,44 14,42.6 16,41.6 18.4,40.1 16.9,40.5 17,39 15.8,38 15.6,40 13,41.2 10.5,42.9 8.8,44.4 6.5,43.2 3.2,43.3 3.1,41.8 0,39.5 -.5,37.8 -2.2,36.8 -5.5,36.1 -6.8,37.1
-6,35.8 -2,35.2 3,36.8 9.8,37.3 11,36.9 10.2,34.3 11,33.2 15.2,32.3 19,30.4 20,32.3 22,32.9 25,31.6 29,30.9 32.3,31.2 32.6,29.9 33.8,27.5 35.5,24 37.2,21 37.4,18.8 39.5,15.5 43.2,12.5 43.3,11.5 51,11.9 51.2,10.5 48,4.5 44,1 41.5,-1.8 39.2,-4.8 39.5,-7 40.6,-10.7 40.5,-15 37,-17.7 34.8,-20 35.5,-23.8 32.7,-25.8 32.5,-28.5 30.2,-31.2 27,-33.6 22,-34.1 20,-34.8 18.4,-34 18,-32 16.5,-28.6 14.5,-22.8 11.8,-17.5 13.7,-12 12.2,-6 9,-1 9.6,2.5 8.5,4.6 6,4.3 4.3,6.3 1,6 -2,4.8 -4.5,5.2 -7.7,4.4 -11.5,6.9 -13.3,9 -15,11 -16.8,12.5 -17.5,14.7 -16.3,17 -17,21 -15.5,24 -13,27.8 -10,29.5 -9.6,31.3 -6.5,34
49.3,-12 50.4,-15.5 47.1,-25 45,-25.5 43.3,-22.5 44.4,-19.5 44,-17 47,-15.5
-5.5,50.1 1.3,51.2 1.7,52.7 .2,53.2 -1.5,55 -3,56 -2,57.6 -4,57.8 -3.2,58.6 -5,58.5 -6,57 -4.8,55 -3,54 -4.5,53.2 -5,51.8 -3,51.4
-10,52 -6.3,52.2 -6,54 -7.5,55.3 -10,54.2
-24,65.5 -22,66.4 -20.3,65.8 -16,66.5 -13.7,65 -18.5,63.4 -22.5,63.9
11,79 15,77 18,76.7 20,77.6 21,78.5 27,80 20,80.3
51.5,71.8 56,70.7 57.5,70.8 55.5,72.5 56,73.5 61,75 68.5,76.5 66,77 57,75.5 53.5,73.5
95,79 100,78 105,78.5 100,80 95,81
137,75.5 141,74.7 143,75 146,75 150,75.1 145,75.8
140,73.4 143.5,73.2 142,73.9
178.5,71 181,70.9 182.5,71.2 180.5,71.6
142,54 143.3,52 143.1,49 144.5,49 142.7,46.2 142,47.5 142.2,51
140,41.7 141.8,45.4 145.3,43.3 143.2,42
141.3,41.3 142,39.5 140.8,35.8 138.8,34.8 135.8,33.6 131,34 133,35.5 136.7,37.2 139.5,38.5 140,40.5
130,33.5 131.8,33.4 131.2,31.3 130,32
132.5,33.7 134.5,34.2 133.8,33.3
121.5,25.2 120.8,22 120.2,23.2
108.8,19.5 110.8,20 110.2,18.5
120.5,18.5 122.2,18.4 121.6,16 124,13 120.8,13.9 119.9,16
122,7 125.5,9.7 126.4,7 125.4,5.7
122,10.5 123,11.6 123.4,9.4
124.5,12.4 125.5,12.2 125,10.3
117.3,8.5 119.5,11.2 119,10
109,1.5 109.6,2 111.5,2.5 113.5,3.5 116.7,7 119,5.2 117.7,2 117.5,.5 116,-2 114.5,-4 111.8,-3.3 110,-1.3
95.3,5.6 98,4.3 103.5,-1 106,-3 105.7,-5.8 102.3,-4 99,0
105.3,-6.8 108.5,-6.7 112.6,-6.9 114.5,-8.6 108,-7.8
120,1 125,1.5 121,.5 120.3,-1 123.3,-.8 121.5,-2 122.5,-5 121,-3 120.3,-5.5 119,-3.5
116,-8.5 119,-8.3 122.8,-8.3 119,-9
124,-10 127,-8.5 125,-9.6
127.5,1.8 128.6,1 127.9,-.6
128,-3 130.5,-3.1 129,-3.5
131,-.8 134,-.8 135,-3.3 138,-1.7 144,-3.9 147.5,-6 147,-7 150.5,-10.5 147.5,-10 144,-7.8 142.5,-9.2 138,-8.3 137.8,-5.3 133,-4
148.5,-5.7 151.5,-4.9 152.2,-4.2 150,-6.2
114,-22 113.5,-26 115,-30 115.7,-33.5 118,-35 123.5,-34 126,-32.3 131.2,-31.5 134,-32.7 135.5,-34.8 137.8,-33 138,-35.6 140,-37.5 143.5,-38.8 146.3,-39 150,-37.5 151.5,-33.2 153.3,-30 153.2,-26 151,-23.5 149,-20.5 146.3,-19 145.3,-15.3 143.5,-14.2 142.5,-10.8 141.6,-13 141.5,-16 140.5,-17.6 137,-16 135.5,-15 136.8,-12.3 133,-11.6 130.8,-12.3 129.5,-15 127,-13.9 124,-16.3 122.2,-18 119,-20
144.8,-40.8 148.3,-40.9 148,-43.2 146.2,-43.6
173,-34.5 175.5,-37 178.4,-37.8 177,-39.5 175.2,-41.5 173.8,-39.3 174.7,-37.5
172.7,-40.6 174.2,-41.7 171.2,-44.2 170.5,-46 168.5,-46.6 166.6,-46 170.5,-43
80,9.7 81.8,7 80.3,6
8.3,40.8 9.7,41 9.5,39.2 8.5,39
12.5,38 15.6,38.2 15.1,36.8
23.6,35.5 26.2,35.2 24.8,35
32.5,35.1 34.4,35.6 33,34.7`;

const water = `
28,41.6 28,43.8 30.5,46.5 33,46 33.5,44.5 36,45.2 35,46.3 38.5,47.2 39,46 37.5,45 40,43.5 41.5,41.7 38,41 35,42 31.5,41.2
47,44.8 49,46.5 53,46.8 53,45.2 51,44.5 53.5,42 53,40 54,37.2 51,36.8 49,37.6 49.5,40.3 48,42
58.5,45.5 60.5,46.3 61,45 59.5,44.2
32,.3 34,.2 33.5,-2.4 31.9,-2.2
-92,46.7 -88,48.7 -84.7,46.8 -88,47
-87.8,42 -87.8,44.5 -85,45.9 -86.3,43.5 -86.8,41.8
-84,46 -80.5,45.6 -81.7,43.5 -82.8,43.8 -83.5,45.2
-83.2,41.6 -79,42.8 -81,42.7
-79.5,43.4 -76.3,44.2 -77,43.3
-124.5,65.3 -120,65.2 -118,66.6 -121,66.3 -123,67
-116.5,61 -112,61.6 -109.5,62.8 -113.5,62.2
-111,58.8 -107,59.1 -110,59.3
-98.8,53.5 -96.5,51 -97.5,53.8
-102.3,57.5 -102,56.5 -102.7,56.3
-90,76.9 -84,77 -79,77.3 -85,77.5
-86,73.6 -85.4,71 -84.6,73.5
-81,72.8 -79,71.6 -78.4,73
-77,72.6 -76,71.4 -75,72.4
-112,73 -110,71.2 -109,72.9
-86,75.6 -83,75 -82,75.5
-74,64.4 -71,66.2 -70,66 -72,64.6
-67,63 -65,65.6 -67.5,64.5
-52,74 -56,73.4 -56,74
-28,70.4 -24,71 -26,71.5
-24,73.2 -21,73.6 -24,74
104,51.5 108,53 109.8,55.7 108.6,54.5
77,46.3 74,45.2 76,45.9
30,60.2 32.8,60.3 31.5,61.4
34.5,61.5 36,61 35.5,62.6`;

const borders = `
-123,49 -95,49 -89,48.2 -84.5,46.5 -82.5,43 -79,43.2 -75,45 -71.5,45 -69.5,47.3 -67.5,45.5
-141,69.6 -141,60.3 -135.5,59.7 -130,55.9
-117,32.5 -111,31.3 -106.5,31.8 -103,29 -101,29.5 -97.4,25.9
-92.2,14.5 -91.5,16 -91,17.8 -89.2,17.9
-89.3,14.4 -86,13.8 -83.3,15
-85.7,11 -83.7,10.9
-82.9,8.2 -82.6,9.5
-77.2,7.8 -77.7,7.2
-72,12 -73,9.2 -72,7 -67.5,6.2 -67.5,2.8 -70,1.2 -70,-4.2
-67,1.5 -64,2.2 -64,4 -61,4.6 -60,8
-61,4.6 -59.9,2.5 -56.5,1.9 -54.5,2.3 -52,4
-57.2,5.8 -58,4 -56.5,1.9
-54,5.7 -54.4,4 -54.5,2.3
-79,1.3 -75.5,0 -70,-2.5 -70,-4.2
-80.2,-3.8 -78.5,-4.8 -75.5,-2 -75.3,-.2
-70,-4.2 -73.5,-6.5 -73,-9.5 -70.6,-9.8 -70.5,-11 -69.5,-10.9 -65.3,-10 -65,-12 -60.3,-13.7 -60,-16.2 -58,-17.5 -58,-20
-69.5,-10.9 -69,-15 -69.5,-17.5 -70.4,-18.3
-69.5,-17.5 -68.2,-20 -67.8,-22.8 -62.7,-22.2 -61.7,-19.6 -58.2,-20 -57.9,-22.1 -54.3,-24 -54.6,-25.6 -57.6,-25.4 -58.6,-27.2 -55.8,-27.4 -54.6,-25.6
-62.7,-22.2 -57.6,-25.4
-67.8,-22.8 -68.5,-26 -70,-31 -70,-34 -71.5,-38 -71.7,-42 -71.7,-46 -73,-50
-55.8,-27.4 -57.6,-30.2 -58.3,-33.5
-57.6,-30.2 -55,-31.3 -53.5,-33.7
-2,35 -1.5,32.3 -8.7,28.7 -8.7,27.5 -13,27.6
-8.7,27.3 4.2,19.2 12,23.5
-8.7,27.3 -12,26 -12,23.4 -13,21.3 -17,21
-4.8,25 -6.5,25 -5.5,15.5 -11.5,15.4 -12.2,14.8
8,37 7.6,33.8 9.5,30.2 9.8,26.4 12,23.5 15,23 24,19.6 24,20 25,22 25,31.6
25,22 36.8,22
11.3,33 9.5,30.2
15,23 15.5,16.8 13.5,13.7 3.6,11.7 0,15 4.2,16.5 4.2,19.2
24,19.6 24,15.7 22.2,13 22.9,11 19,9 15.5,7.5 14,13
-5.5,10.4 -2.8,9.7 -2.8,5
0,15 -4,13.5 -5.5,10.4 -8,10.2 -8.4,7.6 -7.5,4.4
-12.2,14.8 -16.5,16
-12.2,14.8 -11.4,12.4 -16.7,12.4
-11.4,12.4 -8,10.2
-13.2,9 -10.5,8.4 -11.4,6.9
1.2,6.1 .5,11 3.6,11.7 2.7,6.4
-2.8,11 .9,11
13.5,13.7 13,9.5 9.5,6.4 8.6,4.8
14.5,10 15.5,7.5 14.6,5 16.2,2.2 9.8,2.3
22.9,11 27.4,5 18.6,3.5 18.6,4.3 14.6,5
23,8.8 28,9.6 33,12.2 34,8.6 36,4.5 35.2,5.4 30.8,3.5 27.4,5
38.5,18 36.5,14.3 42.5,12.5
36.5,14.3 34,8.6
42.5,12.5 43,9.3 48,8 45,5 42,4.1 36,4.5
41,-1.6 41,3.9
34,4.2 34,0
41,-1.6 34,-1 30,-1.1 29.6,-4.5 30.7,-8.3 33,-9.5 34.6,-11.5 40.4,-10.5
34,-1 37.7,-3.1 39.2,-4.7
30.8,3.5 30,-1.1
18.6,3.5 17.8,-1 16,-3.8 12.3,-6
11.3,2.2 13.2,2.2 14.4,-2 11.2,-3.9
12.5,-6 17,-8 22,-9 22,-11 24,-11 24,-13 22,-13 22,-16.2 23.3,-17.6 12,-17.3
24,-11 28,-12.5 29.8,-13.5 28.6,-9 30.7,-8.3
33,-9.5 33,-14 30.2,-15 25.3,-17.7
30.2,-15 33,-16.5 32.8,-20 31.3,-22.4 29.4,-22.2 25.3,-17.7 23.3,-17.6
34.6,-11.5 35.8,-15 35,-17 34.4,-14.5
21,-18.3 21,-22 20,-22 20,-28.4 16.5,-28.6
20,-25 23,-25.3 26,-24.7 29.4,-22.2
31.3,-22.4 32,-26 31,-27 32.8,-26.9
27,-29.6 28.6,-28.6 29.4,-29.5 28,-30.6 27,-29.6
-7,37.2 -7,41.8 -8.8,41.9
-1.8,43.3 3.2,42.4
7.5,43.8 7,45.9 6.1,46.4 7.6,47.6 8.2,49 6,49.5 2.6,51
6,49.5 6,51.8 7.1,53.3
7,45.9 10.4,46.7 13.7,46.5 13.7,45.6
7.6,47.6 13,47.6 13.8,48.7 17,48.7 16,46.8 13.7,46.5
14.2,53.9 14.7,51 12.2,50.3 13.8,48.7
14.7,51 18.8,49.6 22.6,49.2 24,50.7 23.6,52.5 23.8,54 19.8,54.4
17,48.7 18.8,49.6
16.5,46.5 18.9,45.9 22.8,48 17,47.9
22.6,49.2 22.8,48 26.6,48.2 28.2,45.5 29.7,45.3
18.9,45.9 20.3,46.1 22.5,44.5 28.5,43.8
22.5,44.5 22.4,42.3 26,41.7 28,42
19,42.5 20.5,42 21,40.8 26,41.5
15.8,45 19,45 19.3,43
23.8,54 26.5,55.5 28.2,56.2 27.5,59.4
21,56.2 25,56.3 26.5,55.5
24.3,57.9 27.4,57.6
23.6,51.5 30.5,51.4 32,53 28.2,56.2
30.5,51.4 34,52.2 40,49.6 38.2,47.2
11.3,59 12.3,61.5 12.2,63.8 14.5,66 16.5,68 20.5,69.1 24,65.9
20.5,69.1 25.8,69.7 28.8,69.9 30,67.7 29,66.8 31.5,62.9 28,60.6
41.5,41.6 43.5,41.1 46.5,41.8 48.5,41.8
40,43.4 44.5,42.7 46.5,41.8
43.5,41.1 44.7,39.7 48.8,38.4
44.7,39.7 44.8,37.2 42.3,37.2 36.2,36.6
42.3,37.2 41.3,34.5 36,32.5 35,29.5
44.8,37.2 46,33 48.5,30
41.3,34.5 39,32 45,29.2 48,29.2
39,32 37,30.5 35,29.4
51.5,24.3 55,22.7 55.2,20 52,19 45,17.3 43,16.5
52,19 53,16.7
55.2,22.8 56,24.8
49,46.3 47,48 47,50.2 51.5,51.6 55,50.8 61.5,50.8 61,53.8 70,55.2 76,54.3 80,51 87,49.2
52.5,42 56,41.3 56,45 61,44 66,42.5 68,41 71,42.5 80,42.2
56,41.3 60,42 66.5,37.4
53.8,37.3 58,38 61.2,36.5 64.5,36.8 66.5,37.4 71.5,37.9 74.9,37.2
66.5,42 71,40.2 73.7,39.5
67.5,37.2 68.5,39.5 73.7,39.6 74.9,37.2
87,49.2 85.5,47 82,45.5 80.2,42.2 76,40.3 73.7,39.5
61.2,36.5 60.8,31.5 61.8,31 61,29.5 63,27.2 61.6,25.3
60.9,29.8 66.3,29.9 69.5,32 71,34.3 74.9,37.2
68.2,23.7 70,27.8 74.5,31 74,34 77.5,35.5
74.9,37.2 77.5,35.5 79,32.5 81,30.2 86,28 88.8,27.9 92,27.8 97,28.3
80.2,28.7 84,27.4 88.1,26.4
88.8,27.3 92,26.9
89,22 88.2,25.5 92,25.2 92.3,23 92.5,21
97,28.3 94.2,23.8 92.5,21.3
97,28.3 98.7,25.5 97.7,23.9 101.2,21.3 105.3,23.3 108,21.5
101.2,21.3 97.5,18.5 99,14 98.8,10.5
101.2,21.3 102,17.9 104.8,16.4 105.5,14.4 102.4,13.6 102.8,11.7
102.2,22.3 105,19 107.5,15 107.5,12 104.6,10.5
105.5,14.4 107.5,14.5
100.1,6.5 102,6
109.6,1.9 112,1.3 115,3.5 115.8,4.3 117.5,4.2
141,-2.6 141,-9.1
87,49.2 92,50.7 98,52 102.2,51.4 107,49.8 116.7,49.9 120,52.8 125.5,53.1 127.5,50 131,47.8 134.8,48.3 133,45 131,43
87.8,49.1 91,45.2 96,42.8 105,41.7 112,43.7 119.8,46.7 116.7,49.9
124.3,40 127,41.6 130.6,42.4
126.7,37.8 128.4,38.6`;

const regions = `
-141,60 -102,60 -94.8,60
-110,60 -110,49
-120,60 -120,54 -114.2,49
-102,60 -101.5,49
-95,60 -88.8,56.8
-95,49 -95,52.8 -88.8,56.8
-136.5,69 -133,65 -129,62 -124,60
-120,69.5 -112,65.5 -102,64.2 -102,60
-79.5,51.3 -79.5,47 -75,45.2
-67.3,55 -64,52 -57,51.5
-67.5,58 -67.3,55 -64,54.5 -64.5,60
-117,49 -117,42 -124.1,42
-124,46 -119,46 -117,46
-120,42 -120,39 -114.6,35
-117,46 -114.5,45.5 -111,45
-116,49 -116,48 -111,44.5
-114,42 -114,32.5
-120,42 -111,42 -111,41 -102,41
-111,45 -104,45 -104,49
-111,45 -111,42
-104,45 -104,41
-109,41 -109,31.3
-114,37 -94.6,37
-102,41 -102,37
-103,37 -103,32 -106.5,32
-104,43 -96.5,43
-104,46 -96.5,46
-102,40 -95.5,40
-97,49 -96.5,43 -94.6,39 -94.6,33
-100,36.5 -94.6,36.5
-100,36.5 -100,34.5 -94.5,33.5
-94,33 -94,29.8
-96.5,43.5 -91,43.5
-95.5,40.6 -91.5,40.6
-92.5,46.5 -91,43.5 -91,40 -89.5,37 -91,33 -91,31
-94.5,36.5 -81.7,36.5 -76,36.5
-94,33 -91,33
-88,35 -88.3,30.5
-91,35 -83,35 -79,33.5
-85.3,35 -85,31 -81.5,30.7
-88,42 -87.6,38
-84.8,41.7 -84.8,39
-90,42.5 -80.5,42
-80.5,42 -80.5,39.7 -75.5,39.7
-85,38 -82,38.5 -80.5,37.5 -77.5,39
-79.8,42 -75.3,42 -73.5,41
-73.3,45 -73.3,42.5 -70.8,42.7
-70,-5 -64,-4 -60,-2 -57,1
-65,-10 -61,-8.5 -57,-9 -50,-9.5 -48,-5 -46,-2
-60,-13 -57,-9
-53,-18 -50,-13 -50,-9.5
-46,-14 -45,-9 -41,-7 -41,-3
-48,-5 -46,-9 -46,-14 -44,-15 -40,-16
-53,-18 -48,-19 -45,-22 -42,-21
-57,-18 -53,-18 -52,-22
-53,-23 -49,-25
-54,-26 -49,-26
-53,-27 -50,-29
-41,-7 -37,-9 -35,-7
129,-14.9 129,-31.7
138,-16.5 138,-26 129,-26
138,-26 141,-26 141,-38
141,-29 149,-29 153,-28.3
141,-34 144,-35.8 148,-36 150,-37.4
36,67 44,66.5 50,67.5 60,68 66,68.5
66,68.5 62,65 60,61 64,58
60,64 54,64.5 48,63 44,61 38,62
50,67 50,64 52,60 48,58
62,65 70,63.5 78,62.5 85,61
84,72 82,68 86,64 85,60 90,58
104,76 112,72 107,68 106,63 108,59
85,61 92,60 96,57 102,58 108,59 114,58 120,59 124,56
96,57 96,53 99,52
90,58 89,55 86,52 85,50
78,61 76,58 80,56 78,54
70,63 69,59 66,57 68,55
60,61 58,58 61,56 60,53
108,59 118,56 121,54
124,56 131,55 134,59 140,62 147,63 158,65
147,60 150,63 158,66 162,69
158,65 166,66 172,66 178,64
158,65 163,63
132,55 131,50 134,49
136,48 138,46
104,59 107,56 113,55 116,52
52,60 56,59 57,56 54,54 56,52
48,62 46,60 42,59 40,57
30,66.5 36,66 34,62 40,61
32,59 36,60 40,59 42,57
32,56 36,57 38,55 42,56
42,56 46,57 50,57 53,56
46,57 46,54 50,54 52,52
36,54 40,54 42,52 46,51 47,50
38,52 38,50 42,49 44,48
42,53 44,55 46,54
50,57 48,54 46,52
32,53 36,52.5 36,51
54,60 54,56
28,59 32,59 31,56.5
40,48 44,47 45,45 47,44.5
40,46 44,45.5 42,43.8
44,61 44,58
58,58 54,57
60,56 58,54
76,54 80,55 84,55 88,53
79,32.5 80,35 92,36.5 97,38.5 96,42
97,28.5 98,32 91,34 90,36
98,32 103,33 102,38 97,39
103,33 105,36 107,38 104,41
103,29 109,31 110,34 105,34
110,34 111,39 107,38
110,39 114,40 114,36 110,35
114,40 119,42 122,46 124,50
119,42 122,41 125,43 130,43
122,46 127,45 131,45
111,34 116,34 118,36
116,34 119,34 120,32
109,31 113,29 116,31 118,32 120,31
104,26 109,27 109,31
104,26 105,23.5
109,27 112,25 116,26 118,28 121,28
114,29 114,25 112,23
116,31 117,28
99,29 102,26 104,28
116,36 116,38 118,38
70,25 74,24 78,25 83,24 87,25
75,30 78,27 84,25
74,22 80,21 84,19
76,18 80,19 81,17
74,16 77,15 80,13
77,11 80,13
84,24 84,20
78,21 77,15`;

const places = [
  ["格陵蘭", 803, 115], ["加拿大", 643, 220], ["美國", 650, 276], ["墨西哥", 647, 322],
  ["委內瑞拉", 738, 363], ["哥倫比亞", 713, 374], ["巴西", 764, 405], ["秘魯", 712, 411],
  ["玻利維亞", 742, 426], ["智利", 728, 452], ["阿根廷", 748, 489], ["芬蘭", 968, 154],
  ["瑞典", 944, 172], ["挪威", 923, 191], ["冰島", 856, 169], ["英國", 893, 214],
  ["波蘭", 949, 228], ["德國", 928, 241], ["烏克蘭", 983, 240], ["法國", 909, 254],
  ["義大利", 933, 264], ["西班牙", 894, 269], ["土耳其", 991, 278], ["哈薩克", 1070, 246],
  ["蒙古", 1159, 251], ["俄羅斯", 1136, 184], ["中國", 1160, 283], ["日本", 1252, 277],
  ["南韓", 1218, 286], ["阿富汗", 1072, 293], ["巴基斯坦", 1073, 308], ["伊朗", 1038, 300],
  ["伊拉克", 1009, 297], ["沙烏地", 1015, 319], ["阿拉伯", 1015, 327], ["阿爾及利亞", 906, 310],
  ["利比亞", 946, 314], ["埃及", 977, 310], ["馬利", 898, 338], ["尼日", 927, 338],
  ["查德", 951, 348], ["蘇丹", 978, 340], ["奈及利亞", 923, 359], ["衣索比亞", 1001, 362],
  ["肯亞", 997, 382], ["剛果民主", 959, 383], ["共和國", 959, 391], ["坦尚尼亞", 995, 400],
  ["安哥拉", 943, 415], ["納米比亞", 942, 433], ["波札那", 963, 443], ["南非", 951, 472],
  ["馬達加斯加", 1022, 438], ["印度", 1100, 325], ["泰國", 1154, 333], ["印尼", 1192, 393],
  ["巴布亞紐", 1269, 395], ["幾內亞", 1269, 403], ["澳洲", 1237, 448], ["紐西蘭", 1317, 493],
];

const pins = [
  [910, 236, 9], [919, 233, 11], [925, 244, 12], [1000, 400, 13], [1122, 326, 10],
  [1094, 362, 9], [1155, 376, 12], [1155, 376, 9], [1200, 397, 9], [1205, 300, 10],
  [1204, 319, 21], [1202, 321, 16], [1184, 324, 19], [1191, 327, 13], [1176, 333, 9],
  [1501, 255, 12], [1504, 293, 13],
];

const copies = [-WORLD, 0, WORLD];
const seams = [-224, 0, 224, 448].map((d) => `<path class="seam" d="M${902.5 + d} 0V700"/>`).join("") +
  [159, 383].map((y) => `<path class="seam" d="M454 ${y}.5H1350"/>`).join("");

// The overview card hides most labels of the leftmost copy.
const isVisible = (x, dx) => x < 1930 && (dx < 0 ? x > 280 && x < 310 : true);

document.getElementById("map").innerHTML =
  `<defs><g id="world">
    <path class="land" d="${pathFrom(land, true, 0.28, 2)}"/>
    <path class="water" d="${pathFrom(water, true, 0.2, 2)}"/>
    <path class="region" d="${pathFrom(regions, false, 0.18, 2)}"/>
    <path class="border" d="${pathFrom(borders, false, 0.14, 2)}"/>
    ${seams}
  </g></defs>` +
  copies.map((dx) => `<use href="#world" x="${dx}"/>`).join("") +
  copies.map((dx) => places
    .filter(([, x]) => isVisible(x + dx, dx))
    .map(([name, x, y]) => `<text class="place" x="${x + dx}" y="${y}">${name}</text>`).join("")).join("") +
  pins.map(([x, y, r]) => `<circle class="pin" cx="${x}" cy="${y}" r="${r}"/>`).join("");

document.querySelectorAll(".bars").forEach((chart) => {
  chart.innerHTML = chart.dataset.values.split(",")
    .map((v) => `<i style="height:${v}px"></i>`).join("");
});
```
